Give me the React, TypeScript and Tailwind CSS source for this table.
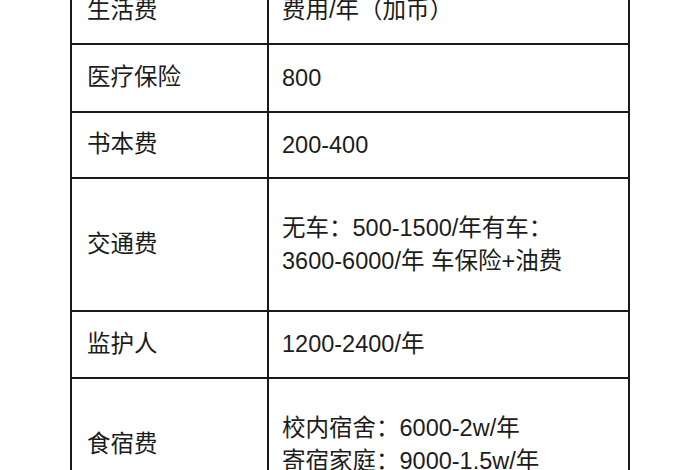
const rows: { label: string; value: string[]; h: string }[] = [
  { label: "生活费", value: ["费用/年（加币）"], h: "h-[67px]" },
  { label: "医疗保险", value: ["800"], h: "h-[68px]" },
  { label: "书本费", value: ["200-400"], h: "h-[66px]" },
  { label: "交通费", value: ["无车：500-1500/年有车：", "3600-6000/年 车保险+油费"], h: "h-[133px]" },
  { label: "监护人", value: ["1200-2400/年"], h: "h-[67px]" },
  { label: "食宿费", value: ["校内宿舍：6000-2w/年", "寄宿家庭：9000-1.5w/年"], h: "h-[134px]" },
];

export default function App() {
  return (
    <main
      className="h-[470px] w-[700px] overflow-hidden bg-white text-[#1c1c1c]"
      style={{ fontFamily: '"Liberation Sans", "Noto Sans CJK SC", sans-serif' }}
    >
      {/* 表格 */}
      <div className="ml-[70px] -mt-[22px] w-[560px]">
        {rows.map((r) => (
          <div key={r.label} className={`flex ${r.h}`}>
            <div className="flex w-[199px] items-center border-b-2 border-l-2 border-r-2 border-[#1a1a1a] pl-[15px] text-[23.5px]">
              {r.label}
            </div>
            <div className="flex w-[361px] flex-col justify-center border-b-2 border-r-2 border-[#1a1a1a] pl-[13px] text-[23.5px] leading-[33px]">
              {r.value.map((v) => (
                <div key={v}>{v}</div>
              ))}
            </div>
          </div>
        ))}
      </div>
    </main>
  );
}
